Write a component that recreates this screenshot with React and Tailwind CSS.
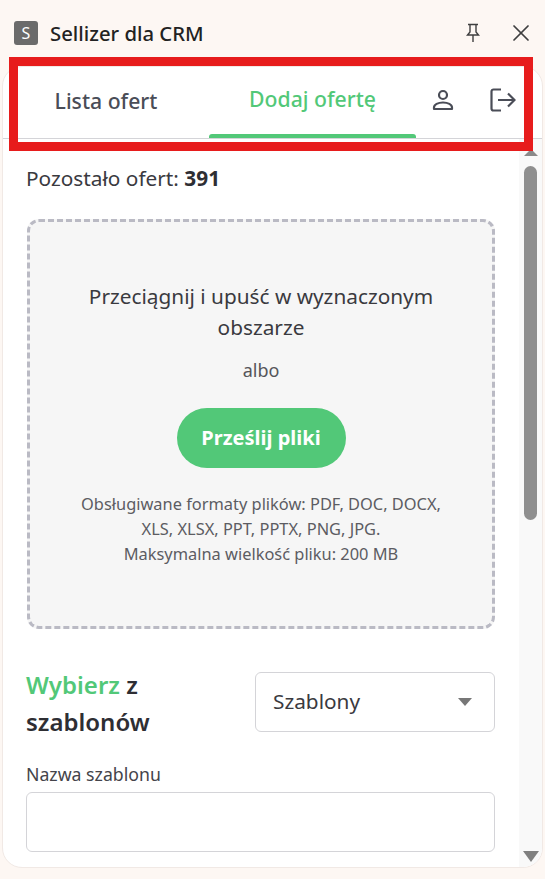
import { X } from "lucide-react";

const green = "text-[#52c878]";

function PinIcon() {
  return (
    <svg width="16" height="20" viewBox="0 0 16 20" fill="none" stroke="#3f3f3f" strokeWidth="1.4">
      <path d="M3 1.5h10M5 1.5v7.5L2.5 12h11L11 9V1.5M8 12v7" />
    </svg>
  );
}

function UserIcon() {
  return (
    <svg width="24" height="24" viewBox="0 0 24 24" fill="none" stroke="#4a4d57" strokeWidth="2.2">
      <circle cx="12" cy="7" r="4" />
      <path d="M3 21v-1.5c0-3 4-5 9-5s9 2 9 5V21z" strokeLinejoin="round" />
    </svg>
  );
}

function LogoutIcon() {
  return (
    <svg width="26" height="24" viewBox="0 0 26 24" fill="none" stroke="#4a4d57" strokeWidth="2.2">
      <path d="M11 1.5H3.5a2 2 0 0 0-2 2v17a2 2 0 0 0 2 2H11" />
      <path d="M8 12h16M18 5.5 24.5 12 18 18.5" />
    </svg>
  );
}

function App() {
  return (
    <div className="relative flex h-[879px] w-[545px] flex-col overflow-hidden bg-[#fdf7f3] font-['Noto_Sans',sans-serif] text-[#2e2e33]">
      <header className="flex h-[66px] shrink-0 items-center justify-between pl-[14px] pr-[10px]">
        <div className="flex items-center gap-[12px]">
          <span className="flex h-[24px] w-[24px] items-center justify-center rounded-[3px] bg-[#6b6b6b] text-[16px] text-white">S</span>
          <span className="text-[20.3px] font-medium text-[#222222]">Sellizer dla CRM</span>
        </div>
        <div className="flex items-center gap-[26px]">
          <PinIcon />
          <X size={28} strokeWidth={1.5} color="#3f3f3f" />
        </div>
      </header>

      <main className="mx-[2px] flex h-[802px] flex-col overflow-hidden rounded-[20px] border border-[#f1e9e5] bg-white">
        <nav className="flex h-[72px] shrink-0 border-b border-[#d4d4d8]">
          <div className="flex w-[206px] items-center justify-center pb-[4px] text-[21.2px] font-medium text-[#4a4d57]">Lista ofert</div>
          <div className="flex w-[207px] flex-col items-center justify-end">
            <span className={`mb-[19px] text-[21.2px] font-medium ${green}`}>Dodaj ofertę</span>
            <span className="h-[4px] w-full rounded-t-[3px] bg-[#52c878]" />
          </div>
          <div className="flex flex-1 items-center gap-[35px] pb-[6px] pl-[15px]">
            <UserIcon />
            <LogoutIcon />
          </div>
        </nav>

        <div className="flex min-h-0 flex-1">
          <section className="w-[516px] shrink-0 pl-[23px] pr-[24px]">
            <p className="mt-[24px] text-[20.8px] leading-[30px]">
              <span className="text-[#3a3a3f]">Pozostało ofert: </span>
              <strong className="font-bold">391</strong>
            </p>

            <div className="ml-[1px] mt-[26px] flex h-[410px] flex-col items-center rounded-[12px] border-[3px] border-dashed border-[#babac4] bg-[#f6f6f6] px-[40px] pt-[59px] text-center">
              <p className="text-[20.8px] leading-[31px] text-[#3a3a3f]">Przeciągnij i upuść w wyznaczonym obszarze</p>
              <p className="mt-[15px] text-[18px] leading-[24px] text-[#55555a]">albo</p>
              <button className="mt-[26px] h-[60px] w-[169px] rounded-full bg-[#52c878] text-[20px] font-bold text-white" type="button">
                Prześlij pliki
              </button>
              <p className="mt-[23px] whitespace-nowrap text-[16.4px] leading-[25px] text-[#5c5c62]">
                Obsługiwane formaty plików: PDF, DOC, DOCX,
                <br />
                XLS, XLSX, PPT, PPTX, PNG, JPG.
                <br />
                Maksymalna wielkość pliku: 200 MB
              </p>
            </div>

            <div className="mt-[43px] flex items-start justify-between">
              <h2 className="-mt-[6px] w-[190px] text-[24px] font-semibold leading-[37px]">
                <span className={green}>Wybierz</span> z szablonów
              </h2>
              <div className="flex h-[60px] w-[240px] items-center justify-between rounded-[6px] border border-[#d4d4d8] pl-[17px] pr-[22px] text-[20.8px] text-[#3a3a3f]">
                Szablony
                <span className="h-0 w-0 border-x-[7px] border-t-[8px] border-x-transparent border-t-[#777777]" />
              </div>
            </div>

            <label className="mt-[21px] block text-[17.7px] leading-[26px] text-[#44444a]">Nazwa szablonu</label>
            <input className="mt-[5px] block h-[60px] w-[469px] rounded-[6px] border border-[#d4d4d8]" type="text" />
          </section>

          <aside className="relative flex flex-1 flex-col items-center bg-[#f9f9f9]">
            <span className="mt-[10px] h-0 w-0 border-x-[7px] border-b-[7px] border-x-transparent border-b-[#8a8a8a]" />
            <span className="mt-[10px] h-[354px] w-[13px] rounded-full bg-[#8f8f8f]" />
            <span className="mb-[5px] mt-auto h-0 w-0 border-x-[8px] border-t-[11px] border-x-transparent border-t-[#808080]" />
          </aside>
        </div>
      </main>

      <div className="absolute left-[9px] top-[57px] h-[94px] w-[524px] border-[9px] border-[#e71c1c]" />
    </div>
  );
}

export default App;
